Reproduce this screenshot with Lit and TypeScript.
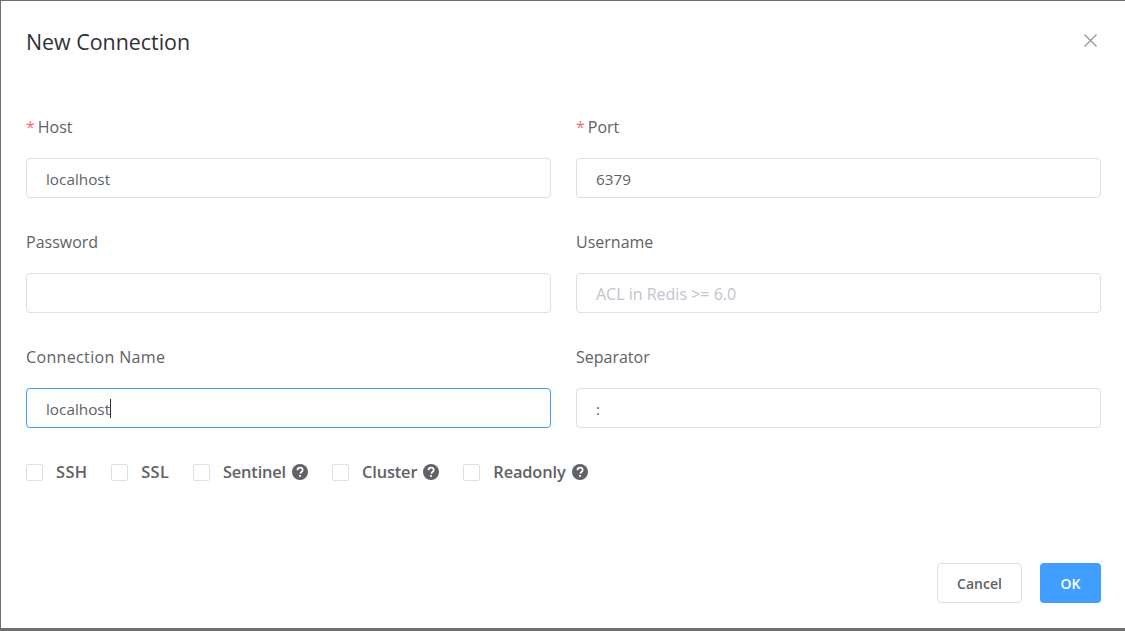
import { LitElement, html, css } from "lit";
import { customElement } from "lit/decorators.js";

const help = html`<svg class="help" viewBox="0 0 16 16" aria-hidden="true"><circle cx="8" cy="8" r="8" fill="#606266"></circle><path d="M5.4 6.2C5.5 4.6 6.6 3.7 8.1 3.7c1.5 0 2.6.9 2.6 2.2 0 1-.5 1.5-1.3 2.1-.7.5-.9.8-.9 1.5v.3" fill="none" stroke="#fff" stroke-width="1.7"></path><rect x="7.1" y="11" width="1.8" height="1.8" fill="#fff"></rect></svg>`;

@customElement("app-root")
export class AppRoot extends LitElement {
  static styles = css`
    :host {
      display: block;
      width: 1125px;
      height: 631px;
      overflow: hidden;
      font-family: "Open Sans", "Noto Sans", sans-serif;
      color: #606266;
      background: #fff;
    }
    .dialog {
      box-sizing: border-box;
      height: 631px;
      display: flex;
      flex-direction: column;
      border-top: 1px solid #6e6e6e;
      border-left: 1px solid #6e6e6e;
      border-bottom: 3px solid #6e6e6e;
      padding: 0 24px 0 25px;
    }
    .head {
      display: flex;
      justify-content: space-between;
      align-items: center;
      height: 82px;
      flex: none;
    }
    .title {
      font-size: 21.4px;
      line-height: 30px;
      color: #303133;
      margin-top: -1px;
    }
    .close {
      width: 13px;
      height: 13px;
      margin: -4px 4px 0 0;
      stroke: #909399;
      stroke-width: 1.2;
      fill: none;
      display: block;
    }
    .grid {
      display: grid;
      grid-template-columns: 525px 525px;
      column-gap: 25px;
      row-gap: 22px;
      margin-top: 22px;
    }
    .field {
      display: flex;
      flex-direction: column;
    }
    .label {
      font-size: 16px;
      line-height: 22px;
      height: 53px;
      box-sizing: border-box;
      padding-top: 11px;
      color: #606266;
      white-space: nowrap;
    }
    .label.wide {
      letter-spacing: 0.35px;
    }
    .req {
      color: #f56c6c;
      margin-right: 3px;
    }
    .input {
      box-sizing: border-box;
      width: 100%;
      height: 40px;
      border: 1px solid #dcdfe6;
      border-radius: 4px;
      padding: 1px 19px 0;
      display: flex;
      align-items: center;
      font-size: 15.3px;
      color: #606266;
    }
    .input.ph {
      color: #c0c4cc;
      font-size: 16px;
    }
    .input.focus {
      border-color: #409eff;
    }
    .caret {
      display: inline-block;
      width: 1px;
      height: 19px;
      background: #303133;
    }
    .checks {
      display: flex;
      align-items: center;
      margin-top: 33px;
      height: 22px;
    }
    .check {
      display: flex;
      align-items: center;
      font-size: 16.4px;
      font-weight: 600;
      color: #606266;
      margin-right: 24px;
      white-space: nowrap;
    }
    .check.short {
      margin-right: 23.6px;
    }
    .text {
      margin-bottom: 2px;
    }
    .short .text {
      letter-spacing: 0.4px;
    }
    .snug .text {
      letter-spacing: -0.15px;
    }
    .box {
      box-sizing: border-box;
      width: 17px;
      height: 17px;
      border: 1px solid #dcdfe6;
      border-radius: 2px;
      margin-right: 13px;
      flex: none;
    }
    .help {
      width: 16px;
      height: 16px;
      margin-left: 6px;
      display: block;
    }
    .foot {
      margin-top: auto;
      display: flex;
      justify-content: flex-end;
      gap: 18px;
      padding-bottom: 25px;
    }
    .btn {
      box-sizing: border-box;
      height: 40px;
      border-radius: 4px;
      display: flex;
      align-items: center;
      justify-content: center;
      font-size: 14px;
      font-weight: 600;
    }
    .cancel {
      width: 85px;
      border: 1px solid #dcdfe6;
      color: #606266;
    }
    .ok {
      width: 61px;
      background: #409eff;
      color: #fff;
    }
  `;

  render() {
    return html`<div class="dialog">
      <div class="head">
        <div class="title">New Connection</div>
        <svg class="close" viewBox="0 0 13 13"><path d="M.5.5l12 12M12.5.5l-12 12"></path></svg>
      </div>
      <div class="grid">
        <div class="field"><div class="label"><span class="req">*</span>Host</div><div class="input">localhost</div></div>
        <div class="field"><div class="label"><span class="req">*</span>Port</div><div class="input">6379</div></div>
        <div class="field"><div class="label">Password</div><div class="input"></div></div>
        <div class="field"><div class="label">Username</div><div class="input ph">ACL in Redis &gt;= 6.0</div></div>
        <div class="field"><div class="label wide">Connection Name</div><div class="input focus">localhost<span class="caret"></span></div></div>
        <div class="field"><div class="label">Separator</div><div class="input">:</div></div>
      </div>
      <div class="checks">
        <div class="check short"><span class="box"></span><span class="text">SSH</span></div>
        <div class="check short"><span class="box"></span><span class="text">SSL</span></div>
        <div class="check snug"><span class="box"></span><span class="text">Sentinel</span>${help}</div>
        <div class="check snug"><span class="box"></span><span class="text">Cluster</span>${help}</div>
        <div class="check snug"><span class="box"></span><span class="text">Readonly</span>${help}</div>
      </div>
      <div class="foot">
        <div class="btn cancel">Cancel</div>
        <div class="btn ok">OK</div>
      </div>
    </div>`;
  }
}
